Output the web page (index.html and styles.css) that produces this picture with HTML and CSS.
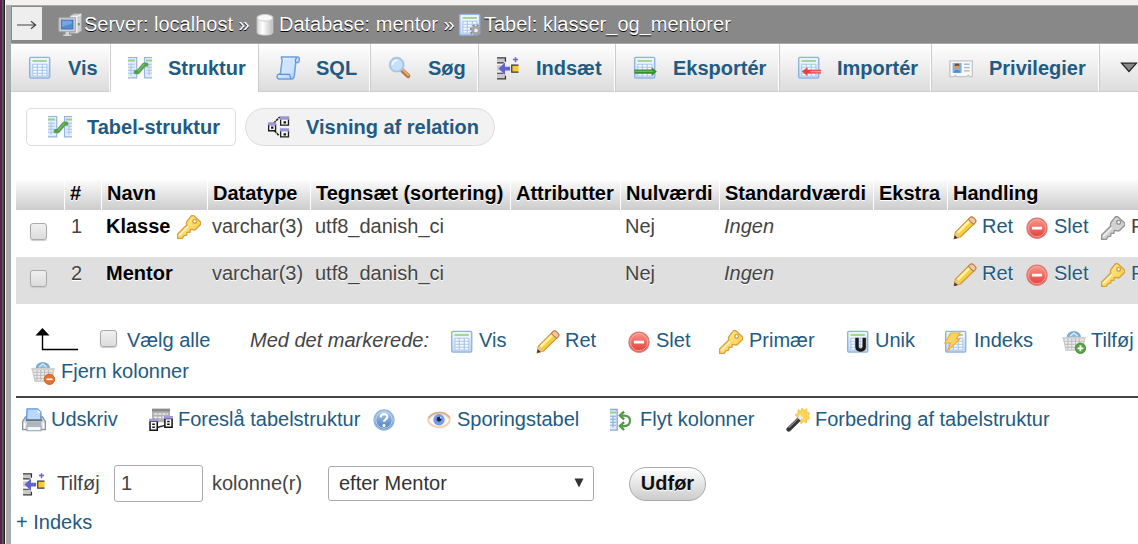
FILE: index.html
```html
<!DOCTYPE html>
<html lang="da">
<head>
<meta charset="utf-8">
<title>klasser_og_mentorer</title>
<link rel="stylesheet" href="styles.css">
</head>
<body>
<svg class="defs" width="0" height="0">
  <defs>
    <linearGradient id="gTable" x1="0" y1="0" x2="0" y2="1"><stop offset="0" stop-color="#eef5fd"/><stop offset="1" stop-color="#b9d3f2"/></linearGradient>
    <linearGradient id="gKey" x1="0" y1="0" x2="1" y2="1"><stop offset="0" stop-color="#fff3a6"/><stop offset="1" stop-color="#f5c633"/></linearGradient>
    <linearGradient id="gRed" x1="0" y1="0" x2="0" y2="1"><stop offset="0" stop-color="#f79a90"/><stop offset="1" stop-color="#e23c36"/></linearGradient>
    <linearGradient id="gBlue" x1="0" y1="0" x2="0" y2="1"><stop offset="0" stop-color="#a9c8ee"/><stop offset="1" stop-color="#4d7db8"/></linearGradient>
    <linearGradient id="gScroll" x1="0" y1="0" x2="1" y2="1"><stop offset="0" stop-color="#f4f9ff"/><stop offset="1" stop-color="#a9cdf5"/></linearGradient>
    <linearGradient id="gCyl" x1="0" y1="0" x2="1" y2="0"><stop offset="0" stop-color="#d6d6d6"/><stop offset=".35" stop-color="#fff"/><stop offset="1" stop-color="#bdbdbd"/></linearGradient>
  </defs>
  <symbol id="table" viewBox="0 0 16 16">
    <rect x="1.1" y=".9" width="13.4" height="13.8" rx=".8" fill="url(#gTable)" stroke="#8fb2e0" stroke-width=".9"/>
    <rect x="2.3" y="2.2" width="11" height="11.4" fill="#fff" fill-opacity=".45"/>
    <rect x="3" y="2.6" width="9.6" height="1.4" fill="#a5d697"/>
    <path d="M3 5.5h9.7v8H3z" fill="#f8fbff"/>
    <path d="M3 5.5h9.7M3 7.5h9.7M3 9.5h9.7M3 11.5h9.7M3 13.3h9.7M3.2 5.5v8M6.2 5.5v8M9.5 5.5v8M12.6 5.5v8" stroke="#a9c4e9" stroke-width=".75"/>
  </symbol>
  <symbol id="structure" viewBox="0 0 16 16">
    <path d="M0 1h5.8v13.6H0zM11 1h5v13.6h-5z" fill="#e2edfa"/>
    <path d="M0 1h5.8v13.6H0M16 1h-5v13.6h5" fill="none" stroke="#93b5e4" stroke-width=".8"/>
    <path d="M0 3h4.6M12 3h4" stroke="#99cf87" stroke-width="1.3"/>
    <path d="M0 5.5h4.5M0 7.5h4.5M0 9.5h4.5M0 11.5h4.5M2 5v8M12.3 5.5H16M12.3 7.5H16M12.3 9.5H16M12.3 11.5H16M14 5v8" stroke="#a9c4e9" stroke-width=".7"/>
    <path d="M5.1 10.8h1.5L10.8 5.8h1.4" fill="none" stroke="#55a04d" stroke-width="2.8" stroke-linecap="round" stroke-linejoin="round"/>
    <path d="M6.8 10.2l4-4.8" stroke="#7dbc72" stroke-width=".8"/>
  </symbol>
  <symbol id="sql" viewBox="0 0 16 16">
    <path d="M3.7.6h11c1.2.3 1.1 3.1.1 3.7h-1.6l-1 8.9c-.3 1.5-1 2.2-2 2.2H1.7c-1.3-.3-1.3-2.6 0-3.3h1.2L4.1 3C4.1 1.8 3.2 1.1 3.7.6z" fill="url(#gScroll)" stroke="#6b9fe0" stroke-width="1"/>
    <path d="M2 12.2h6.6c1.3 0 .4 2.5 1.6 3M13.1 4.2c-.4-1.3 0-2.5.8-3" fill="none" stroke="#5d91d2" stroke-width=".8"/>
    <path d="M5.5 2.5h6.3L10.8 11H4.5z" fill="#cfe3fb"/>
  </symbol>
  <symbol id="search" viewBox="0 0 16 16">
    <path d="M9.6 9.8l3.8 3.5" stroke="#b9783c" stroke-width="3" stroke-linecap="round"/>
    <path d="M9.8 9.2l3.8 3.6" stroke="#e7b987" stroke-width="1" stroke-linecap="round"/>
    <circle cx="5.8" cy="5.8" r="4.6" fill="#c5e0fb" stroke="#a9c4e6" stroke-width="1.3"/>
    <path d="M3 6c0-2 1.2-3.1 3.4-3.1" stroke="#eef7ff" fill="none" stroke-width="1.3"/>
  </symbol>
  <symbol id="insert" viewBox="0 0 16 16">
    <path d="M.7 1.5h5.5v2.7H.7zM.7 11.8h5.5v3H.7zM.7 6.2h3v3.7h-3z" fill="#c9c9c9"/>
    <path d="M.7 1.2h5.6v2.6M.7 4.6h4.5M.7 11.5H5M.7 15.2h5.6v-2" fill="none" stroke="#333" stroke-width=".8"/>
    <path d="M1.7 8.4L6 4.3v2.8h3.4v2.6H6v2.8z" fill="#6262cf"/>
    <path d="M10.6 6.3h4.4v4.2h-4.4z" fill="#ffc92f"/>
    <path d="M15 6.1h-4.5v4.6H15" fill="none" stroke="#333" stroke-width=".8"/>
    <path d="M13 .8v3.3M11.3 2.4h3.4" stroke="#6b65d4" stroke-width="1"/>
  </symbol>
  <symbol id="export" viewBox="0 0 16 16">
    <use href="#table"/>
    <path d="M1 9h11.5V7.5l3.4 2.9-3.4 2.9v-1.5H1z" fill="#3c8d35"/><path d="M1.5 10.2h12" stroke="#75b96b" stroke-width=".8"/>
  </symbol>
  <symbol id="import" viewBox="0 0 16 16">
    <use href="#table"/>
    <path d="M3.3 10.4L7 7.5v1.6h9v2.6H7v1.6z" fill="#e83f3f"/><path d="M9 10.4h7" stroke="#ff9b95" stroke-width="1.1"/>
  </symbol>
  <symbol id="rights" viewBox="0 0 16 16">
    <path d="M.6 3.2h15v10.5h-2l-.7-.8-.8.8H5l-.8-.8-.8.8H.6z" fill="#f8f8f8" stroke="#c5c5c5" stroke-width=".9"/>
    <rect x="2.4" y="4.7" width="6" height="6.5" fill="#77b0ec"/>
    <circle cx="5.3" cy="7" r="1.8" fill="#d69a5e"/><path d="M3.7 6.5c.1-2 3.2-2 3.3 0z" fill="#70451f"/><path d="M3 11.2c.1-2.6 4.5-2.6 4.8 0z" fill="#4c8bd2"/>
    <path d="M10 5.5h3.8" stroke="#8fc0ef"/><path d="M10 7.7h3.8M10 9.9h3.8" stroke="#b4b4b4" stroke-width=".8"/>
  </symbol>
  <symbol id="relation" viewBox="0 0 16 16">
    <path d="M4.5 5.5L8.5 1.3M5 10.5l3 3.3" stroke="#222" stroke-width="1.1" stroke-dasharray="1.8 .5"/>
    <path d="M1.1 6.3h4.6v4.2H1.1zM9.1 2h5.2v4.7H9.1zM9.1 10.2h5.2v4.4H9.1z" fill="#fff" stroke="#1d1d1d" stroke-width=".9"/>
    <path d="M.7 4.9h5.4v2H.7zM8.6.9h6.1v2.2H8.6zM8.6 8.9h6.1V11H8.6z" fill="#9a96d4"/>
    <path d="M2.7 7.7h1.6v1.5H2.7zM11 4.1h1.7v1.5H11zM11 12.1h1.7v1.5H11z" fill="#111"/>
  </symbol>
  <symbol id="server" viewBox="0 0 16 16">
    <path d="M8 2.2L10.6.5h5V12L13 13.5H8z" fill="#cfcfcf" stroke="#a5a5a5" stroke-width=".6"/><path d="M8.5 2.3h4v11M12.5 2.3l3-1.4" fill="none" stroke="#f2f2f2" stroke-width=".8"/>
    <rect x=".6" y="3.2" width="11" height="9.2" rx=".6" fill="#cdd1d8" stroke="#a3a9b2" stroke-width=".7"/>
    <rect x="2.2" y="4.7" width="7.8" height="6" fill="#518bd2" stroke="#3468ad" stroke-width=".5"/><path d="M2.7 5.2h6.4v2l-6.4 2z" fill="#74a5e0"/>
    <path d="M5 12.5h2.4v1.8h1.5v1h-5.4v-1H5z" fill="#d4d4d4"/><path d="M13.9 6.7v1.6" stroke="#4eb348" stroke-width="1.3"/>
  </symbol>
  <symbol id="database" viewBox="0 0 16 16">
    <path d="M2.8 3v10c0 2.3 10.4 2.3 10.4 0V3z" fill="url(#gCyl)" stroke="#d2d2d2" stroke-width=".6"/><ellipse cx="8" cy="3.2" rx="5.2" ry="2.2" fill="#f7f7f7" stroke="#d0d0d0" stroke-width=".7"/>
  </symbol>
  <symbol id="tableprop" viewBox="0 0 16 16">
    <use href="#table"/>
    <circle cx="12" cy="11.6" r="3.5" fill="none" stroke="#8e8e8e" stroke-width="1.3" stroke-dasharray="1.5 1.25"/><circle cx="12" cy="11.6" r="2.1" fill="#eee" stroke="#a2a2a2" stroke-width="1.7"/>
  </symbol>
  <g id="keyshape">
    <path d="M9.3.9c.7-.7 1.5-.7 2.1-.2l4 3.6c.7.7.7 1.5.1 2.2l-3 3c-.6.6-1.4.6-2.2.3L8.9 9.7l-.3 1.8-1.9.1-.3 1.9-1.7.2-1.2 1.9H.4v-2.9l6.1-6c-.4-1-.3-1.8.4-2.8z"/>
    <path d="M1.4 13.7l6-6" stroke="#fff" stroke-opacity=".65" stroke-width="1"/><circle cx="11.8" cy="4.2" r="1.25" fill="#fff"/>
  </g>
  <symbol id="key" viewBox="0 0 16 16"><use href="#keyshape" fill="url(#gKey)" stroke="#d8a03d" stroke-width=".9"/></symbol>
  <symbol id="keyoff" viewBox="0 0 16 16"><use href="#keyshape" fill="#d2d2d2" stroke="#929292" stroke-width=".9"/></symbol>
  <symbol id="pencil" viewBox="0 0 16 16">
    <path d="M.8 15.1l.8-4.3L11.3 1.2c.8-.8 1.6-.7 2.4 0l1 1c.8.8.8 1.5 0 2.4L5 14z" fill="#f6ce42" stroke="#d39338" stroke-width=".8"/>
    <path d="M3 11.2l8-8" stroke="#fff5a8" stroke-width="1.7"/><path d="M10.2 2.3l1.1-1.1c.8-.8 1.6-.7 2.4 0l1 1c.8.8.8 1.5 0 2.4l-1 1z" fill="#f3c9a3" stroke="#b88358" stroke-width=".7"/>
    <path d="M.8 15.1l.8-4.1L5 14z" fill="#e9c490"/><path d="M.6 15.4l.5-2.6 2.2 1.9z" fill="#4a3522"/>
  </symbol>
  <symbol id="drop" viewBox="0 0 16 16">
    <circle cx="8" cy="8.1" r="6.7" fill="url(#gRed)" stroke="#de7770" stroke-width=".8"/><circle cx="8" cy="8.1" r="5.7" fill="none" stroke="#f7aaa2" stroke-width=".6"/><rect x="4.6" y="7.1" width="6.8" height="1.9" rx=".3" fill="#fff"/>
  </symbol>
  <symbol id="unique" viewBox="0 0 16 16">
    <use href="#table"/><path d="M6 5h2.7v6c0 1.6 2.1 1.6 2.1 0V5h2.7v6.3c0 4.5-7.5 4.5-7.5 0z" fill="#181818" stroke="#fff" stroke-width=".3"/>
  </symbol>
  <symbol id="index" viewBox="0 0 16 16">
    <use href="#table"/><path d="M4.5 2h6.2L8.2 6h2.4L2 14.2l2.5-5.5H.5z" fill="#f9d260" stroke="#e8ab3e" stroke-width=".7"/>
  </symbol>
  <symbol id="basket" viewBox="0 0 16 16">
    <path d="M4.3 5C4.6 1 11.6 1 12 5z" fill="#8db9db"/>
    <path d="M3.8 5.5C3.6.2 12.2.2 12 5.5" fill="none" stroke="#7aaad0" stroke-width="1.6"/><path d="M5.4 4l2.5-2 2.6 2" stroke="#d5e9f8" stroke-width="1" fill="none"/>
    <path d="M1 5.7h14L13.8 13.4H2.7z" fill="#f0f0f0" stroke="#c4c4c4" stroke-width=".8"/>
    <path d="M1.5 7.5h13M2 9.5h12M2.6 11.5h11M4 6v7M6.5 6v7M9 6v7M11.5 6v7" stroke="#b2b2b2" stroke-width=".6"/><path d="M.2 5.3h15.6" stroke="#d0d0d0" stroke-width="1.4"/>
  </symbol>
  <symbol id="basketadd" viewBox="0 0 16 16"><use href="#basket"/><circle cx="12.3" cy="12.2" r="3.5" fill="#55a43f" stroke="#3c8230" stroke-width=".5"/><path d="M12.3 10.2v4M10.3 12.2h4" stroke="#fff" stroke-width="1.2"/></symbol>
  <symbol id="basketdel" viewBox="0 0 16 16"><use href="#basket"/><circle cx="12.3" cy="12.2" r="3.5" fill="#e8702a" stroke="#c65518" stroke-width=".5"/><path d="M10.3 12.2h4" stroke="#fff" stroke-width="1.1"/></symbol>
  <symbol id="printer" viewBox="0 0 16 16">
    <path d="M2.3 6h11.4l1.9 3v5.4H.4V9z" fill="#dcdfe3" stroke="#8b929b" stroke-width=".9"/>
    <path d="M3.4.6h7l2.2 2.2V8H3z" fill="#b9d8fa" stroke="#5f96d8" stroke-width=".9"/><path d="M10.4.8v2.3h2.1" fill="#fff"/>
    <path d="M2.5 8.2h11" stroke="#6b7078" stroke-width="1.2"/><path d="M3.2 9h9.6v2.8H3.2z" fill="#aeb4bb"/><path d="M3.3 12.2h9.4v3H3.3z" fill="#f4f7fa" stroke="#96a1ae" stroke-width=".7"/><path d="M1.6 10v3.5M14.4 10v3.5" stroke="#fff"/>
  </symbol>
  <symbol id="propose" viewBox="0 0 16 16">
    <path d="M2 .5h12v9H2z" fill="#b2b2b2"/><path d="M2 1.4h12" stroke="#8b8b8b" stroke-width="1.8"/><path d="M3.5 4h9M3.5 6.2h9" stroke="#eee" stroke-width="1.1" stroke-dasharray="2 .7"/>
    <path d="M5.5 13l5-1.4" stroke="#222" stroke-width=".9"/><path d="M.7 8.8h4.8v6H.7zM10.6 7h4.8v5.9h-4.8z" fill="#fff" stroke="#111"/>
    <path d="M0 7.2h6V9H0zM10 5.3h6v1.8h-6z" fill="#a39bdb"/><path d="M2.2 10.4h1.7v1H2.2zM2.2 12.3h1.7v1H2.2zM12.1 8.5h1.7v1h-1.7zM12.1 10.4h1.7v1h-1.7z" fill="#111"/>
  </symbol>
  <symbol id="help" viewBox="0 0 16 16">
    <circle cx="8" cy="8" r="6.6" fill="url(#gBlue)" stroke="#94b7df"/><circle cx="8" cy="8" r="5.5" fill="none" stroke="#cde0f4" stroke-width=".6"/>
    <path d="M5.8 6.3c.1-3 4.7-2.8 4.4-.2C10 7.6 8 7.6 8 9.2" fill="none" stroke="#fff" stroke-width="1.6"/><circle cx="8" cy="11.6" r="1" fill="#fff"/>
  </symbol>
  <symbol id="eye" viewBox="0 0 16 16">
    <path d="M0 8.2C2 1.2 13.4.4 16 7.2c-.2 8-13.8 8.6-16 1z" fill="#f3d3bb"/><path d="M.8 6.8c3.2-5 11.4-5.2 14.4-.4" stroke="#d3a98a" fill="none" stroke-width="1"/>
    <path d="M1.3 8.3c2.7-5 10-5.3 13.4-.4-2 5.2-10.2 5.6-13.4.4z" fill="#fbfbff"/><circle cx="8" cy="7.8" r="3.8" fill="#729ce7"/><circle cx="8" cy="7.5" r="1.6" fill="#152953"/><circle cx="9.1" cy="6.5" r=".5" fill="#fff"/>
  </symbol>
  <symbol id="move" viewBox="0 0 16 16">
    <path d="M0 1h4.8v13.7H0z" fill="#e2edfa"/><path d="M0 1h4.8v13.7H0" fill="none" stroke="#86abdc" stroke-width=".9"/><path d="M0 3h4" stroke="#99cf87" stroke-width="1.3"/><path d="M0 5.5h4M0 7.5h4M0 9.5h4M0 11.5h4M2 5v8" stroke="#8fafe0" stroke-width=".8"/>
    <path d="M8 5h1.6c5 0 5 7 0 7H8" fill="none" stroke="#559b48" stroke-width="1.5"/><path d="M9.4 2.4L6.6 5l2.8 2.6M9.4 9.4L6.6 12l2.8 2.7" fill="none" stroke="#4c9740" stroke-width="1.5"/>
  </symbol>
  <symbol id="wand" viewBox="0 0 16 16">
    <path d="M10.8 0l1.1 2 2-1.5v2.4l2.1.6-1.3 1.7 1.2 2-2.2.4-.1 2.3-2-1-1.5 1.6-.8-2.2-2.3-.1.7-2.2L6 4.6l2.1-1L8 1.2l2 1z" fill="#ffd659" stroke="#f4bd3d" stroke-width=".6"/>
    <path d="M1.8 14.3L9.2 7" stroke="#343434" stroke-width="3" stroke-linecap="round"/><path d="M1.8 13.2l6.8-6.6" stroke="#8b8b8b" stroke-width=".8"/><path d="M8.7 7.4l1.8-1.8" stroke="#ececec" stroke-width="2.9"/>
  </symbol>
</svg>

<div class="window">
  <div class="edge"></div>
  <main class="page">
    <header class="crumbs">
      <span class="toggle">
        <svg width="20" height="12" viewBox="0 0 20 12"><path d="M0 6h18M14 2.2l4.6 3.8-4.6 3.8" fill="none" stroke="#444" stroke-width="1.2"/></svg>
      </span>
      <nav class="crumb-list">
        <span class="crumb"><svg class="ico"><use href="#server"/></svg>Server: localhost »</span>
        <span class="crumb"><svg class="ico"><use href="#database"/></svg>Database: mentor »</span>
        <span class="crumb"><svg class="ico"><use href="#tableprop"/></svg>Tabel: klasser_og_mentorer</span>
      </nav>
    </header>

    <nav class="tabs">
      <a class="tab"><svg class="ico"><use href="#table"/></svg>Vis</a>
      <a class="tab active"><svg class="ico"><use href="#structure"/></svg>Struktur</a>
      <a class="tab"><svg class="ico"><use href="#sql"/></svg>SQL</a>
      <a class="tab"><svg class="ico"><use href="#search"/></svg>Søg</a>
      <a class="tab"><svg class="ico"><use href="#insert"/></svg>Indsæt</a>
      <a class="tab"><svg class="ico"><use href="#export"/></svg>Eksportér</a>
      <a class="tab"><svg class="ico"><use href="#import"/></svg>Importér</a>
      <a class="tab"><svg class="ico"><use href="#rights"/></svg>Privilegier</a>
      <a class="tab more"><svg width="18" height="12" viewBox="0 0 18 12"><path d="M1.5 1.2h15L9 9.5z" fill="#888" stroke="#222" stroke-width="1.2"/></svg></a>
    </nav>

    <nav class="subtabs">
      <a class="sub current"><svg class="ico"><use href="#structure"/></svg>Tabel-struktur</a>
      <a class="sub"><svg class="ico"><use href="#relation"/></svg>Visning af relation</a>
    </nav>

    <section class="columns">
      <div class="row head"><b></b><b>#</b><b>Navn</b><b>Datatype</b><b>Tegnsæt (sortering)</b><b>Attributter</b><b>Nulværdi</b><b>Standardværdi</b><b>Ekstra</b><b>Handling</b></div>
      <div class="row">
        <span><i class="check"></i></span><span class="num">1</span><span class="name">Klasse<svg class="ico"><use href="#key"/></svg></span><span>varchar(3)</span><span>utf8_danish_ci</span><span></span><span>Nej</span><em>Ingen</em><span></span>
        <span class="actions"><a><svg class="ico"><use href="#pencil"/></svg>Ret</a><a><svg class="ico"><use href="#drop"/></svg>Slet</a><a class="off"><svg class="ico"><use href="#keyoff"/></svg>Primær</a></span>
      </div>
      <div class="row even">
        <span><i class="check"></i></span><span class="num">2</span><span class="name">Mentor</span><span>varchar(3)</span><span>utf8_danish_ci</span><span></span><span>Nej</span><em>Ingen</em><span></span>
        <span class="actions"><a><svg class="ico"><use href="#pencil"/></svg>Ret</a><a><svg class="ico"><use href="#drop"/></svg>Slet</a><a><svg class="ico"><use href="#key"/></svg>Primær</a></span>
      </div>
    </section>

    <section class="bulk">
      <svg class="arrow" width="44" height="24" viewBox="0 0 44 24"><path d="M7.5 3v18.5H43" fill="none" stroke="#000" stroke-width="1.4"/><path d="M7.5 0l7 7.5h-14z"/></svg>
      <i class="check"></i><a>Vælg alle</a><em>Med det markerede:</em>
      <a class="link"><svg class="ico"><use href="#table"/></svg>Vis</a>
      <a class="link"><svg class="ico"><use href="#pencil"/></svg>Ret</a>
      <a class="link"><svg class="ico"><use href="#drop"/></svg>Slet</a>
      <a class="link wide"><svg class="ico"><use href="#key"/></svg>Primær</a>
      <a class="link"><svg class="ico"><use href="#unique"/></svg>Unik</a>
      <a class="link wide"><svg class="ico"><use href="#index"/></svg>Indeks</a>
      <a class="link"><svg class="ico"><use href="#basketadd"/></svg>Tilføj</a>
    </section>
    <section class="bulk-more"><a class="link"><svg class="ico"><use href="#basketdel"/></svg>Fjern kolonner</a></section>

    <section class="tools">
      <a class="link"><svg class="ico"><use href="#printer"/></svg>Udskriv</a>
      <a class="link"><svg class="ico"><use href="#propose"/></svg>Foreslå tabelstruktur</a>
      <a class="link"><svg class="ico"><use href="#help"/></svg></a>
      <a class="link"><svg class="ico"><use href="#eye"/></svg>Sporingstabel</a>
      <a class="link"><svg class="ico"><use href="#move"/></svg>Flyt kolonner</a>
      <a class="link"><svg class="ico"><use href="#wand"/></svg>Forbedring af tabelstruktur</a>
    </section>

    <form class="add">
      <svg class="ico"><use href="#insert"/></svg>
      <span>Tilføj</span>
      <input class="count" type="text" value="1">
      <span>kolonne(r)</span>
      <div class="select"><span>efter Mentor</span><svg width="10" height="10" viewBox="0 0 10 10"><path d="M.5 .5h9L5 9.5z" fill="#333"/></svg></div>
      <button class="go" type="button">Udfør</button>
    </form>
    <a class="indexes">+ Indeks</a>
  </main>
</div>
</body>
</html>
```
FILE: styles.css
```css
* { box-sizing: border-box; }
html, body { height: 100%; }
body {
  margin: 0;
  overflow: hidden;
  background: #fff;
  color: #444;
  font: 20px/24px "Liberation Sans", Arial, sans-serif;
}
a { color: #235a81; text-decoration: none; white-space: nowrap; }
.defs { display: block; }
.ico { width: 24px; height: 24px; flex: none; }

.window { display: flex; height: 544px; overflow: hidden; }
.edge {
  flex: none;
  width: 11px;
  background:
    linear-gradient(90deg, #5d1c52 0 1px, #4b2c46 1px 2px, #5c5b57 2px 3px, #45443f 3px 4px, #24231f 4px 5px, #f2f1f0 5px 6px, transparent 6px),
    linear-gradient(#f2f1f0 5px, #aaa 5px);
}
.page { flex: none; width: 1127px; height: 544px; overflow: hidden; }

.crumbs {
  display: flex;
  height: 44px;
  border-top: 5px solid #f2f1f0;
  border-bottom: 1px solid #aaa;
  background: #888;
  box-shadow: inset 0 1px #aaa;
}
.toggle {
  display: flex;
  align-items: center;
  justify-content: center;
  width: 30px;
  height: 33px;
  margin: 2px 16px 0 1px;
  padding-top: 2px;
  background: #eee;
}
.crumb-list {
  display: grid;
  grid-template-columns: 195px 205px auto;
  margin-top: 7px;
  color: #fff;
  text-shadow: 0 1px 0 #000;
  white-space: nowrap;
}
.crumb { display: flex; gap: 2px; }
.crumb .ico { margin-top: 1px; }

.tabs {
  display: grid;
  grid-template-columns: 99px 148px 112px 108px 137px 164px 152px 168px 80px;
  height: 48px;
}
.tab {
  display: flex;
  align-items: center;
  gap: 16px;
  padding: 0 0 0 17px;
  border-left: 1px solid #ccc;
  border-right: 1px solid #fff;
  border-bottom: 1px solid #ccc;
  background: linear-gradient(#fff, #dcdcdc);
  font-weight: bold;
}
.tab:first-child { border-left: 0; padding-left: 17px; }
.tab.active { background: #fff; border-bottom-color: #fff; }
.tab.more { padding-left: 20px; }

.subtabs { display: flex; gap: 9px; padding: 16px 0 0 15px; }
.sub {
  display: flex;
  align-items: center;
  gap: 15px;
  height: 38px;
  padding-left: 21px;
  border: 1px solid #ddd;
  border-radius: 20px;
  background: #f2f2f2;
  font-weight: bold;
  width: 250px;
}
.sub.current { width: 210px; border-radius: 5px; background: #fff; }

.columns { margin: 32px 0 0 5px; overflow: hidden; }
.row {
  display: grid;
  grid-template-columns: 48px 36px 105px 102px 199px 109px 98px 153px 73px 300px;
  column-gap: 1px;
  width: 1200px;
  height: 47px;
  padding-top: 4px;
  text-shadow: 0 1px 0 #fff;
  white-space: nowrap;
}
.row > * { padding-left: 4px; }
.head { height: 32px; padding: 0; color: #000; }
.head > b { padding: 3px 0 0 5px; background: linear-gradient(#fff, #ccc); }
.even { background: #dfdfdf; }
.row .num { padding-left: 6px; }
.name { display: flex; gap: 6px; color: #000; font-weight: bold; }
.name .ico { margin-top: 1px; }
.actions .ico { margin-top: 2px; }
.check {
  display: block;
  width: 17px;
  height: 17px;
  border: 1px solid #aaa;
  border-radius: 3px;
  background: linear-gradient(#f0f0f0, #dcdcdc);
  box-shadow: 0 1px 1px #ccc;
}
.row .check { margin: 9px 0 0 10px; }
.row > .actions { display: grid; grid-template-columns: 72px 76px 120px; padding-left: 5px; }
.actions a { display: flex; gap: 5px; }
.actions a:last-child { gap: 6px; }
.actions .off { color: #444; }

.bulk, .tools { display: grid; white-space: nowrap; }
.bulk {
  grid-template-columns: 65px 27px 123px 200px 86px 91px 92px 127px 98px 118px 100px;
  padding: 24px 0 0 24px;
}
.bulk .check { margin-top: 2px; }
.link { display: flex; gap: 6px; }
.link .ico { margin-top: 2px; }
.bulk .link { gap: 5px; }
.bulk .link.wide { gap: 6px; }
.bulk-more { height: 37px; margin-top: 5px; padding-left: 20px; }
.tools {
  grid-template-columns: 127px 223px 55px 183px 176px auto;
  justify-content: start;
  height: 36px;
  margin-left: 5px;
  padding: 9px 0 0 6px;
  border-top: 2px solid #444;
}
.tools .link { gap: 5px; }
.tools .link:nth-child(4), .tools .link:nth-child(5) { gap: 6px; }
.tools .ico { margin-top: 1px; }

.add {
  display: grid;
  grid-template-columns: 35px 57px 98px 116px 301px 77px;
  align-items: center;
  height: 37px;
  margin: 33px 0 0 11px;
}
.add > span, .select span { margin-top: -2px; }
.count {
  width: 89px;
  height: 37px;
  padding: 0 6px;
  border: 1px solid #aaa;
  border-radius: 3px;
  color: #444;
  font: inherit;
}
.select {
  display: flex;
  align-items: center;
  justify-content: space-between;
  width: 266px;
  height: 35px;
  padding: 0 9px 0 10px;
  border: 1px solid #aaa;
  border-radius: 3px;
  color: #333;
}
.select svg { margin-top: -2px; }
.go {
  width: 77px;
  height: 34px;
  padding: 0 0 2px;
  border: 1px solid #aaa;
  border-radius: 17px;
  background: linear-gradient(#fff, #ccc);
  color: #111;
  font: bold 20px/24px "Liberation Sans", Arial, sans-serif;
  text-shadow: 0 1px 0 #fff;
}
.indexes { display: block; margin: 8px 0 0 5px; }
```
